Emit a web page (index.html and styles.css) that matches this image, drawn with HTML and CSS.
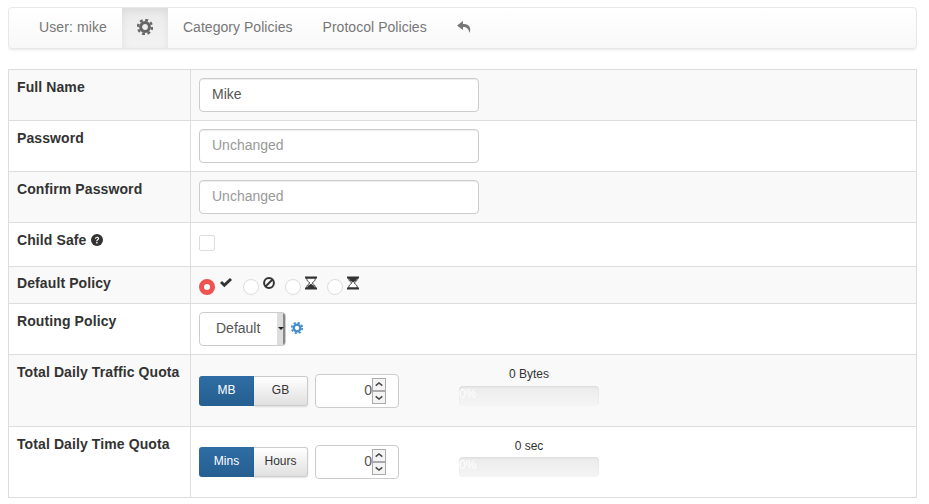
FILE: index.html
```html
<!DOCTYPE html>
<html lang="en">
<head>
    <meta charset="UTF-8">
    <title>User: mike</title>
    <link rel="stylesheet" href="styles.css">
</head>
<body>

<svg class="defs" width="0" height="0">
    <symbol id="gear" viewBox="0 0 16 16">
        <circle cx="8" cy="8" r="4.4" fill="none" stroke="currentColor" stroke-width="3"/>
        <circle cx="8" cy="8" r="7" fill="none" stroke="currentColor" stroke-width="2.4" stroke-dasharray="2.9 2.6"/>
    </symbol>
</svg>

<nav class="navbar">
    <a class="nav-item nav-user">User: mike</a>
    <a class="nav-item nav-active"><svg class="nav-gear"><use href="#gear"/></svg></a>
    <a class="nav-item">Category Policies</a>
    <a class="nav-item">Protocol Policies</a>
    <a class="nav-item">
        <svg class="nav-reply" viewBox="0 0 14 12"><path d="M6 0 L0 4.500 L6 9 V6 C9.500 6 11.500 7.200 12.500 12 C14.800 6 11.500 3 6 3 Z" fill="currentColor"/></svg>
    </a>
</nav>

<table class="form-table">
    <tr class="row-name">
        <th>Full Name</th>
        <td><input class="text-input" type="text" value="Mike"></td>
    </tr>
    <tr class="row-name">
        <th>Password</th>
        <td><input class="text-input" type="password" placeholder="Unchanged"></td>
    </tr>
    <tr class="row-name">
        <th>Confirm Password</th>
        <td><input class="text-input" type="password" placeholder="Unchanged"></td>
    </tr>
    <tr class="row-safe">
        <th>Child Safe<svg class="help" viewBox="0 0 12 12">
                <circle cx="6" cy="6" r="6" fill="#333"/>
                <path d="M3.900 4.700 C4 2 8.200 2 8.200 4.500 C8.200 6 6.400 5.900 6.400 7.300 H5.200 C5.200 5.300 6.900 5.500 6.900 4.500 C6.900 3.400 5.200 3.500 5.100 4.800 Z" fill="#fff"/>
                <rect x="5.200" y="8" width="1.300" height="1.500" fill="#fff"/>
            </svg>
        </th>
        <td><span class="checkbox"></span></td>
    </tr>
    <tr class="row-policy">
        <th>Default Policy</th>
        <td>
            <div class="policies">
                <span class="radio radio-on"></span>
                <svg class="policy-icon policy-first" viewBox="0 0 14 12"><path d="M1 6 L3 4 L5.300 6.300 L11 1 L13 3 L5.300 10.300 Z" fill="#333"/></svg>
                <span class="radio"></span>
                <svg class="policy-icon" viewBox="0 0 14 14"><circle cx="7" cy="7" r="4.900" fill="none" stroke="#333" stroke-width="2"/><path d="M3.500 10.500 L10.500 3.500" stroke="#333" stroke-width="2"/></svg>
                <span class="radio"></span>
                <svg class="policy-icon" viewBox="0 0 14 14"><path d="M2.700 2 C2.700 6 5.800 6 5.800 7 C5.800 8 2.700 8 2.700 12 H11.300 C11.300 8 8.200 8 8.200 7 C8.200 6 11.300 6 11.300 2 Z" fill="#fff" stroke="#333"/><path d="M1 0.500 H13 V2.500 H1 Z M1 11.500 H13 V13.500 H1 Z M3 12 L4 9.800 L7 7.800 L10 9.800 L11 12 Z" fill="#333"/></svg>
                <span class="radio"></span>
                <svg class="policy-icon" viewBox="0 0 14 14"><path d="M2.700 2 C2.700 6 5.800 6 5.800 7 C5.800 8 2.700 8 2.700 12 H11.300 C11.300 8 8.200 8 8.200 7 C8.200 6 11.300 6 11.300 2 Z" fill="#fff" stroke="#333"/><path d="M1 0.500 H13 V2.500 H1 Z M1 11.500 H13 V13.500 H1 Z M3 2 H11 C11 4.500 9 5.200 7 6.500 C5 5.200 3 4.500 3 2 Z" fill="#333"/></svg>
            </div>
        </td>
    </tr>
    <tr class="row-name">
        <th>Routing Policy</th>
        <td>
            <div class="routing">
                <div class="select">
                    <span class="select-value">Default</span>
                    <span class="select-arrow"></span>
                </div>
                <svg class="routing-gear"><use href="#gear"/></svg>
            </div>
        </td>
    </tr>
    <tr class="row-quota">
        <th>Total Daily Traffic Quota</th>
        <td>
            <div class="quota">
                <div class="toggle">
                    <span class="toggle-btn toggle-on">MB</span>
                    <span class="toggle-btn">GB</span>
                </div>
                <div class="spin-input">
                    <span class="spin-value">0</span>
                    <div class="spin-btns">
                        <span class="spin-btn"><svg viewBox="0 0 10 10"><path d="M2 6 L5 3.500 L8 6" fill="none" stroke="#444" stroke-width="1.300"/></svg></span>
                        <span class="spin-btn"><svg viewBox="0 0 10 10"><path d="M2 4 L5 6.500 L8 4" fill="none" stroke="#444" stroke-width="1.300"/></svg></span>
                    </div>
                </div>
                <div class="usage">
                    <div class="usage-label">0 Bytes</div>
                    <div class="progress">0%</div>
                </div>
            </div>
        </td>
    </tr>
    <tr class="row-quota row-last">
        <th>Total Daily Time Quota</th>
        <td>
            <div class="quota">
                <div class="toggle">
                    <span class="toggle-btn toggle-on">Mins</span>
                    <span class="toggle-btn">Hours</span>
                </div>
                <div class="spin-input">
                    <span class="spin-value">0</span>
                    <div class="spin-btns">
                        <span class="spin-btn"><svg viewBox="0 0 10 10"><path d="M2 6 L5 3.500 L8 6" fill="none" stroke="#444" stroke-width="1.300"/></svg></span>
                        <span class="spin-btn"><svg viewBox="0 0 10 10"><path d="M2 4 L5 6.500 L8 4" fill="none" stroke="#444" stroke-width="1.300"/></svg></span>
                    </div>
                </div>
                <div class="usage">
                    <div class="usage-label">0 sec</div>
                    <div class="progress">0%</div>
                </div>
            </div>
        </td>
    </tr>
</table>

</body>
</html>
```

FILE: styles.css
```css
body {
    font-family: "Liberation Sans", Arial, sans-serif;
    font-size: 14px;
    color: #333;
    background-color: #fff;
    margin: 7px 12px 0 8px;
}
.defs {
    position: absolute;
}
.navbar {
    display: flex;
    height: 42px;
    padding-left: 15px;
    margin-bottom: 20px;
    border: 1px solid #e7e7e7;
    border-radius: 4px;
    background: linear-gradient(to bottom, #fff, #f8f8f8);
    box-shadow: 0 1px 3px rgba(0, 0, 0, 0.1);
    box-sizing: border-box;
}
.nav-item {
    display: flex;
    align-items: center;
    padding: 0 15px 2px;
    color: #777;
    letter-spacing: 0.04px;
}
.nav-user {
    letter-spacing: 0.1px;
}
.nav-active {
    width: 46px;
    padding: 0 0 2px;
    justify-content: center;
    background: linear-gradient(to bottom, #ebebeb, #f3f3f3);
    box-shadow: inset 0 3px 9px rgba(0, 0, 0, 0.075);
}
.nav-gear {
    width: 16px;
    height: 16px;
    color: #666;
}
.nav-reply {
    width: 14px;
    height: 12px;
}
.form-table {
    width: 909px;
    border-collapse: collapse;
    table-layout: fixed;
    line-height: 20px;
}
.form-table th, .form-table td {
    border: 1px solid #ddd;
    padding: 8px;
    vertical-align: top;
    box-sizing: border-box;
}
.form-table th {
    width: 182px;
    padding-top: 7px;
    text-align: left;
    letter-spacing: 0.1px;
}
.form-table tr:nth-child(odd) {
    background-color: #f9f9f9;
}
.row-name { height: 51px; }
.row-safe { height: 44px; }
.row-policy { height: 37px; }
.row-quota { height: 72px; }
.row-last { height: 71px; }
.form-table .row-policy th {
    padding-top: 6px;
}
.row-last td {
    padding-top: 7px;
}
.text-input {
    display: block;
    width: 280px;
    height: 34px;
    padding: 5px 12px 7px;
    border: 1px solid #ccc;
    border-radius: 4px;
    background-color: #fff;
    box-shadow: inset 0 1px 1px rgba(0, 0, 0, 0.075);
    font: 14px "Liberation Sans", Arial, sans-serif;
    color: #555;
    box-sizing: border-box;
}
.text-input::placeholder {
    color: #999;
}
.help {
    width: 12px;
    height: 12px;
    margin-left: 5px;
    vertical-align: -1px;
}
.checkbox {
    display: block;
    width: 16px;
    height: 16px;
    margin-top: 4px;
    border: 1px solid #ddd;
    border-radius: 2px;
    background-color: #fff;
    box-sizing: border-box;
}
.policies {
    display: flex;
    align-items: flex-start;
    height: 20px;
}
.radio {
    width: 16px;
    height: 16px;
    margin-top: 4px;
    border: 1px solid #ddd;
    border-radius: 50%;
    background-color: #fff;
    box-sizing: border-box;
}
.radio-on {
    border: 5px solid #ef5350;
}
.policy-icon {
    width: 14px;
    height: 14px;
    margin: 1px 9px 0 3px;
}
.policy-first {
    margin: 1px 10px 0 4px;
}
.routing {
    display: flex;
    align-items: center;
}
.select {
    display: flex;
    width: 87px;
    height: 34px;
    border: 1px solid #ccc;
    border-radius: 4px;
    background-color: #fff;
    box-sizing: border-box;
    overflow: hidden;
}
.select-value {
    flex: 1;
    padding-left: 16px;
    line-height: 31px;
    color: #555;
}
.select-arrow {
    position: relative;
    width: 8px;
    background: linear-gradient(to right, #ddd 75%, #888 75%);
}
.select-arrow::after {
    content: "";
    position: absolute;
    left: 1px;
    top: 14px;
    border: 3px solid transparent;
    border-top-color: #222;
    border-bottom: 0;
}
.routing-gear {
    width: 12px;
    height: 12px;
    margin: 0 0 2px 5px;
    color: #428bca;
}
.quota {
    display: flex;
    align-items: flex-start;
}
.toggle {
    display: flex;
    margin-top: 13px;
    height: 30px;
    font-size: 12px;
    line-height: 27px;
}
.toggle-btn {
    width: 54px;
    text-align: center;
    border: 1px solid #ccc;
    border-left: 0;
    border-radius: 0 3px 3px 0;
    background: linear-gradient(to bottom, #fff, #e0e0e0);
    box-shadow: 0 1px 2px rgba(0, 0, 0, 0.12);
    box-sizing: border-box;
}
.toggle-on {
    width: 55px;
    color: #fff;
    border: 0;
    border-radius: 3px 0 0 3px;
    background: linear-gradient(to bottom, #2e6da4, #265f91);
    box-shadow: none;
    line-height: 29px;
}
.spin-input {
    display: flex;
    align-items: center;
    justify-content: flex-end;
    width: 84px;
    height: 34px;
    margin: 11px 0 0 7px;
    padding-right: 12px;
    border: 1px solid #ccc;
    border-radius: 4px;
    background-color: #fff;
    color: #555;
    box-sizing: border-box;
}
.spin-value {
    margin-bottom: 3px;
}
.spin-btns {
    display: flex;
    flex-direction: column;
}
.spin-btn {
    display: block;
    width: 14px;
    height: 13px;
    border: 1px solid #aaa;
    background-color: #f4f4f4;
    box-sizing: border-box;
}
.spin-btn svg {
    display: block;
    width: 12px;
    height: 11px;
}
.usage {
    width: 140px;
    margin-left: 60px;
    padding-top: 3px;
    font-size: 12px;
    line-height: 17px;
    text-align: center;
}
.row-last .usage {
    padding-top: 4px;
}
.progress {
    height: 20px;
    margin-top: 3px;
    border-radius: 4px;
    background: linear-gradient(to bottom, #ebebeb, #f5f5f5);
    box-shadow: inset 0 1px 2px rgba(0, 0, 0, 0.08);
    color: #fff;
    text-align: left;
    line-height: 16px;
}
.row-last .progress {
    margin-top: 2px;
}
```
